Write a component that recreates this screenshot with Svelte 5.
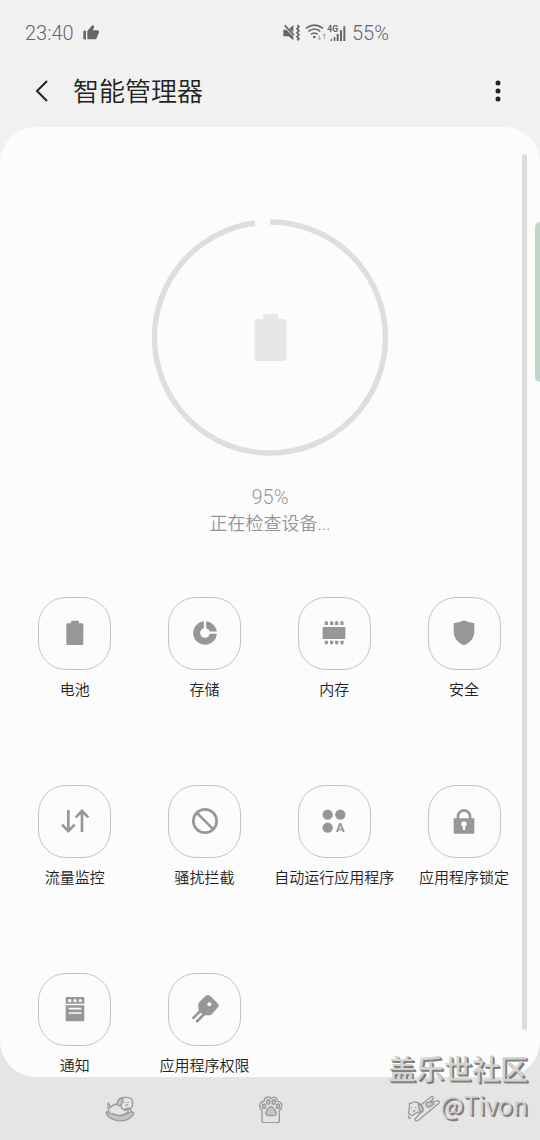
<script lang="ts">
  type Tile = { id: string; label: string };

  const tiles: Tile[] = [
    { id: 'battery', label: '电池' },
    { id: 'storage', label: '存储' },
    { id: 'memory', label: '内存' },
    { id: 'security', label: '安全' },
    { id: 'data', label: '流量监控' },
    { id: 'block', label: '骚扰拦截' },
    { id: 'autorun', label: '自动运行应用程序' },
    { id: 'lock', label: '应用程序锁定' },
    { id: 'notice', label: '通知' },
    { id: 'permission', label: '应用程序权限' },
  ];

  let progress = $state(95);
</script>

<div class="screen">
  <header>
    <div class="status-bar">
      <span>23:40</span>
      <svg class="thumb" width="17" height="16" viewBox="0 0 51 48" aria-hidden="true">
        <path d="M1 17h8v26H1z" />
        <path d="M13 18 28 1c4-1 6 2 5 6l-3 9h14c4 0 5 3 4 6l-7 18c-1 2-3 3-5 3H17c-3 0-4-2-4-4z" />
      </svg>

      <div class="status-right">
        <svg width="17" height="19" viewBox="0 0 51 57" aria-hidden="true">
          <path d="M1 17h9L31 38v11L17 37H1zM19 14 31 3v22z" />
          <path class="line" d="M5 4 33 34" />
          <path class="line" d="M43 3l5 5-6 6 6 6-6 6 6 6-6 6 6 6-5 5" />
        </svg>
        <svg width="22" height="19" viewBox="0 0 66 57" aria-hidden="true">
          <path class="line" d="M3 13Q28-6 54 13M10 22Q28 8 46 22M18 31q10-8 20 0" />
          <circle cx="28" cy="39" r="4" />
          <path class="faint" d="M43 34v13m-5-5 5 5 5-5M58 45V30m-5 5 5-5 5 5" />
        </svg>
        <svg width="19" height="21" viewBox="0 -6 57 63" aria-hidden="true">
          <text x="1" y="20" font-size="26" font-weight="700">4G</text>
          <path d="M11 42h4v6h-4zM20 36h5v12h-5zM29 27h6v21h-6zM39 16h6v32h-6zM49 4h6v44h-6z" />
        </svg>
        <span class="charge">55%</span>
      </div>
    </div>

    <div class="toolbar">
      <button class="icon-button" aria-label="返回">
        <svg width="16" height="22" viewBox="0 0 16 22" aria-hidden="true">
          <path d="M13 1 3 11l10 10" fill="none" stroke="#222" stroke-width="2" />
        </svg>
      </button>
      <h1>智能管理器</h1>
      <button class="icon-button" aria-label="更多选项">
        <svg width="6" height="22" viewBox="0 0 6 22" fill="#222" aria-hidden="true">
          <circle cx="3" cy="3" r="2.5" />
          <circle cx="3" cy="11" r="2.5" />
          <circle cx="3" cy="19" r="2.5" />
        </svg>
      </button>
    </div>
  </header>

  <div class="body">
    <main>
      <section class="check">
        <svg width="238" height="238" viewBox="0 0 238 238" aria-hidden="true">
          <circle
            cx="119"
            cy="118.5"
            r="115.5"
            fill="none"
            stroke="#dedede"
            stroke-width="5.5"
            pathLength="100"
            stroke-dasharray="97.9 2.1"
            transform="rotate(-90 119 118.5)"
          />
          <rect x="112" y="95" width="15" height="8" rx="1.5" fill="#e7e7e7" />
          <rect x="103.5" y="100" width="32" height="42" rx="2" fill="#e7e7e7" />
        </svg>
        <p class="percent">{progress}%</p>
        <p class="message">正在检查设备...</p>
      </section>

      <div class="grid">
        {#each tiles as tile (tile.id)}
          <button class="tile">
            <span class="tile-icon">
              <svg width="36" height="36" viewBox="0 0 108 108" aria-hidden="true">
                {#if tile.id === 'battery'}
                  <rect x="42" y="17" width="24" height="12" rx="2" />
                  <rect x="28" y="25" width="51" height="65" rx="3" />
                {:else if tile.id === 'storage'}
                  <circle cx="54" cy="54" r="25" fill="none" stroke="#979797" stroke-width="21" />
                  <path class="cut" d="M54 54V14M54 53h42" stroke-width="7" />
                {:else if tile.id === 'memory'}
                  <rect x="20" y="36" width="68" height="36" />
                  {#each [26, 42, 57, 73] as x (x)}
                    <path d="M{x} 30v-8q5-8 10 0v8zM{x} 77v8q5 8 10 0v-8z" />
                  {/each}
                {:else if tile.id === 'security'}
                  <path d="M54 16q15 8 31 9v24c0 20-13 35-31 42-18-7-31-22-31-42V25q16-1 31-9z" />
                {:else if tile.id === 'data'}
                  <path class="stroke" d="M34 21v62M15 65l19 19 19-19M75 87V25M56 43l19-19 19 19" />
                {:else if tile.id === 'block'}
                  <circle class="stroke" cx="54" cy="54" r="35" />
                  <path class="stroke" d="m29 29 50 50" />
                {:else if tile.id === 'autorun'}
                  <circle cx="35" cy="35" r="15.5" />
                  <circle cx="73" cy="35" r="15.5" />
                  <circle cx="35" cy="74" r="15.5" />
                  <text x="73" y="88" text-anchor="middle" font-size="40" font-weight="700">A</text>
                {:else if tile.id === 'lock'}
                  <path class="stroke" d="M36 50V40a18 18 0 0 1 36 0v10" />
                  <rect x="23" y="46" width="62" height="46" rx="2" />
                  <circle cx="54" cy="63" r="8" fill="#fcfcfc" />
                  <path class="cut" d="M54 64v17" stroke-width="7" />
                {:else if tile.id === 'notice'}
                  <path d="M26 38V21q0-3 3-3h50q3 0 3 3v17zM26 43h56v45q0 3-3 3H29q-3 0-3-3z" />
                  <path class="cut" d="M35 53h38M35 66h38" stroke-width="5" />
                  <g fill="#fcfcfc">
                    <circle cx="38" cy="29" r="5" />
                    <circle cx="54" cy="29" r="5" />
                    <circle cx="70" cy="29" r="5" />
                  </g>
                {:else}
                  <path d="M56 14q7-5 14 1l23 23q5 6 0 11L75 69q-3 4-8 4H53q-5 0-8-4l-8-8q-3-3-3-8V41q0-4 3-8z" />
                  <circle cx="67" cy="40" r="6" fill="#fcfcfc" />
                  <path class="stroke" d="M41 59 17 83M53 68 28 93" />
                {/if}
              </svg>
            </span>
            <span class="tile-label">{tile.label}</span>
          </button>
        {/each}
      </div>

      <div class="scrollbar"></div>
    </main>
  </div>

  <nav>
    <button aria-label="最近">
      <svg width="30" height="26" viewBox="0 0 90 78" aria-hidden="true">
        <path fill="#c4c4c4" d="M3 49q10-5 20 4 24 12 46-1 10-7 17-3-1 12-18 21-20 9-41 1Q6 64 3 49z" />
        <path fill="#e4e4e4" d="M14 52Q6 35 10 21q5 5 5 15 10-13 27-12 20 5 28 24-25 18-47 5z" />
        <path fill="#e4e4e4" d="M46 8q16-9 32 0 8 10 3 25-12 14-31 5z" />
        <path fill="#c4c4c4" d="M46 7q-9 5-10 19 5 6 11 2 8-12 7-22z" />
        <path d="M58 17v3M69 17v3M61 26q4 3 8-1M59 46q0-9 6-7 6-6 9 1 6 1 3 7" />
      </svg>
    </button>
    <button aria-label="主屏幕">
      <svg width="24" height="28" viewBox="0 0 72 84" aria-hidden="true">
        <path fill="#e4e4e4" d="M9 79V47Q-1 37 4 25q4-7 11-6 2-13 12-13 6 0 9 5 5-6 12-4 7 3 7 12 9 0 13 8 2 12-7 20v32q-2 4-8 4H17q-7 0-8-4z" />
        <g fill="#c4c4c4">
          <ellipse cx="15" cy="34" rx="5" ry="7" />
          <ellipse cx="28" cy="21" rx="5" ry="7" />
          <ellipse cx="44" cy="21" rx="5" ry="7" />
          <ellipse cx="57" cy="34" rx="5" ry="7" />
          <path d="M36 34q9 2 16 20-1 11-16 7-15 4-16-7 6-18 16-20z" />
        </g>
      </svg>
    </button>
    <button aria-label="后退">
      <svg width="33" height="27" viewBox="0 0 99 81" aria-hidden="true">
        <path fill="#e4e4e4" d="M42 29 73 5q9-2 5 7L67 23l26-6q8 3 0 10L34 76q-10 5-10-4l18-20z" />
        <path fill="#c4c4c4" d="M57 25q14-8 25 2L65 37q-9-1-8-12z" />
        <path fill="#e4e4e4" d="M8 31q-4-9 5-6 11-9 25 1 14 12 9 23-6 8-15 2L16 61q-8 0-11-7z" />
        <path fill="#c4c4c4" d="M34 26q15 7 14 20-6 8-11 0z" />
        <path d="M14 37v3M26 37v3M17 47q4 3 8-1M7 61l-3 5q2 8 8 1" />
      </svg>
    </button>
  </nav>

  <div class="edge-handle"></div>
  <div class="watermark">
    <span class="community">盖乐世社区</span>
    <span>@Tivon</span>
  </div>
</div>

<style>
  :global(body) {
    margin: 0;
  }

  .screen {
    position: relative;
    display: flex;
    flex-direction: column;
    min-height: 100vh;
    background: #e5e5e5;
    color: #222;
    font-family: Roboto, 'Noto Sans CJK SC', sans-serif;
    font-weight: 350;
  }

  header {
    padding-bottom: 9px;
    background: #f1f1f1;
  }

  button {
    border: 0;
    padding: 0;
    background: none;
    color: inherit;
    font: inherit;
    cursor: pointer;
  }

  svg {
    display: block;
    flex: none;
  }

  .status-bar {
    display: flex;
    align-items: center;
    height: 66px;
    padding: 0 151px 0 25px;
    color: #666;
    font-size: 20px;
    fill: #666;
  }

  .thumb {
    margin-left: 9px;
  }

  .status-right {
    display: flex;
    align-items: center;
    margin-left: auto;
  }

  .status-right svg + svg {
    margin-left: 5px;
  }

  .status-right svg + svg + svg {
    margin-left: 0;
  }

  .charge {
    margin-left: 6px;
  }

  .line {
    fill: none;
    stroke: #666;
    stroke-width: 5;
  }

  .faint {
    fill: none;
    stroke: #aaa;
    stroke-width: 3;
  }

  .toolbar {
    display: flex;
    align-items: center;
    height: 50px;
    padding: 0 22px 2px;
  }

  .icon-button {
    display: flex;
    align-items: center;
    justify-content: center;
    width: 40px;
    height: 40px;
  }

  h1 {
    flex: 1;
    margin: 2px 0 0 11px;
    font-size: 26px;
    font-weight: 350;
    line-height: 40px;
  }

  .body {
    flex: 1;
    background: linear-gradient(#f1f1f1 50%, #e5e5e5 50%);
  }

  main {
    position: relative;
    box-sizing: border-box;
    min-height: 100%;
    padding: 92px 10px 1px;
    border-radius: 36px;
    background: #fcfcfc;
  }

  .check {
    display: flex;
    flex-direction: column;
    align-items: center;
    margin-bottom: 58px;
    color: #959595;
  }

  .check p {
    margin: 0;
  }

  .check .percent {
    margin-top: 28px;
    font-size: 20px;
    line-height: 24px;
  }

  .message {
    font-size: 18px;
    line-height: 30px;
  }

  .grid {
    display: grid;
    grid-template-columns: repeat(4, 1fr);
    row-gap: 85px;
    margin-right: 1px;
  }

  .tile {
    display: flex;
    flex-direction: column;
    align-items: center;
    gap: 10px;
    min-width: 0;
  }

  .tile-icon {
    display: flex;
    align-items: center;
    justify-content: center;
    box-sizing: border-box;
    width: 73px;
    height: 73px;
    padding-bottom: 1px;
    border: 1px solid #c4c4c4;
    border-radius: 28px;
    fill: #979797;
  }

  .tile-icon .stroke {
    fill: none;
    stroke: #979797;
    stroke-width: 8;
  }

  .tile-icon .cut {
    fill: none;
    stroke: #fcfcfc;
  }

  .tile-label {
    font-size: 15px;
    line-height: 20px;
    white-space: nowrap;
  }

  .scrollbar {
    position: absolute;
    top: 27px;
    right: 13px;
    bottom: 47px;
    width: 5px;
    border-radius: 3px;
    background: #dcdcdc;
  }

  nav {
    display: grid;
    grid-template-columns: repeat(3, 1fr);
    height: 63px;
    padding: 0 41px 0 44px;
  }

  nav button {
    display: flex;
    align-items: center;
    justify-content: center;
  }

  nav svg {
    fill: none;
    stroke: #9a9a9a;
    stroke-width: 4;
    stroke-linejoin: round;
  }

  .edge-handle {
    position: absolute;
    top: 222px;
    right: 0;
    width: 5px;
    height: 160px;
    border-radius: 5px 0 0 5px;
    background: #bcd9ca;
  }

  .watermark {
    position: absolute;
    right: 12px;
    bottom: 18px;
    display: flex;
    flex-direction: column;
    align-items: flex-end;
    color: #d6d2cf;
    font-family: 'Noto Sans CJK SC', sans-serif;
    font-size: 25px;
    line-height: 36px;
    text-shadow: 1px 1px 0 #808080, 2px 2px 0 #808080;
    pointer-events: none;
  }

  .community {
    font-size: 28px;
    font-weight: 500;
  }
</style>
